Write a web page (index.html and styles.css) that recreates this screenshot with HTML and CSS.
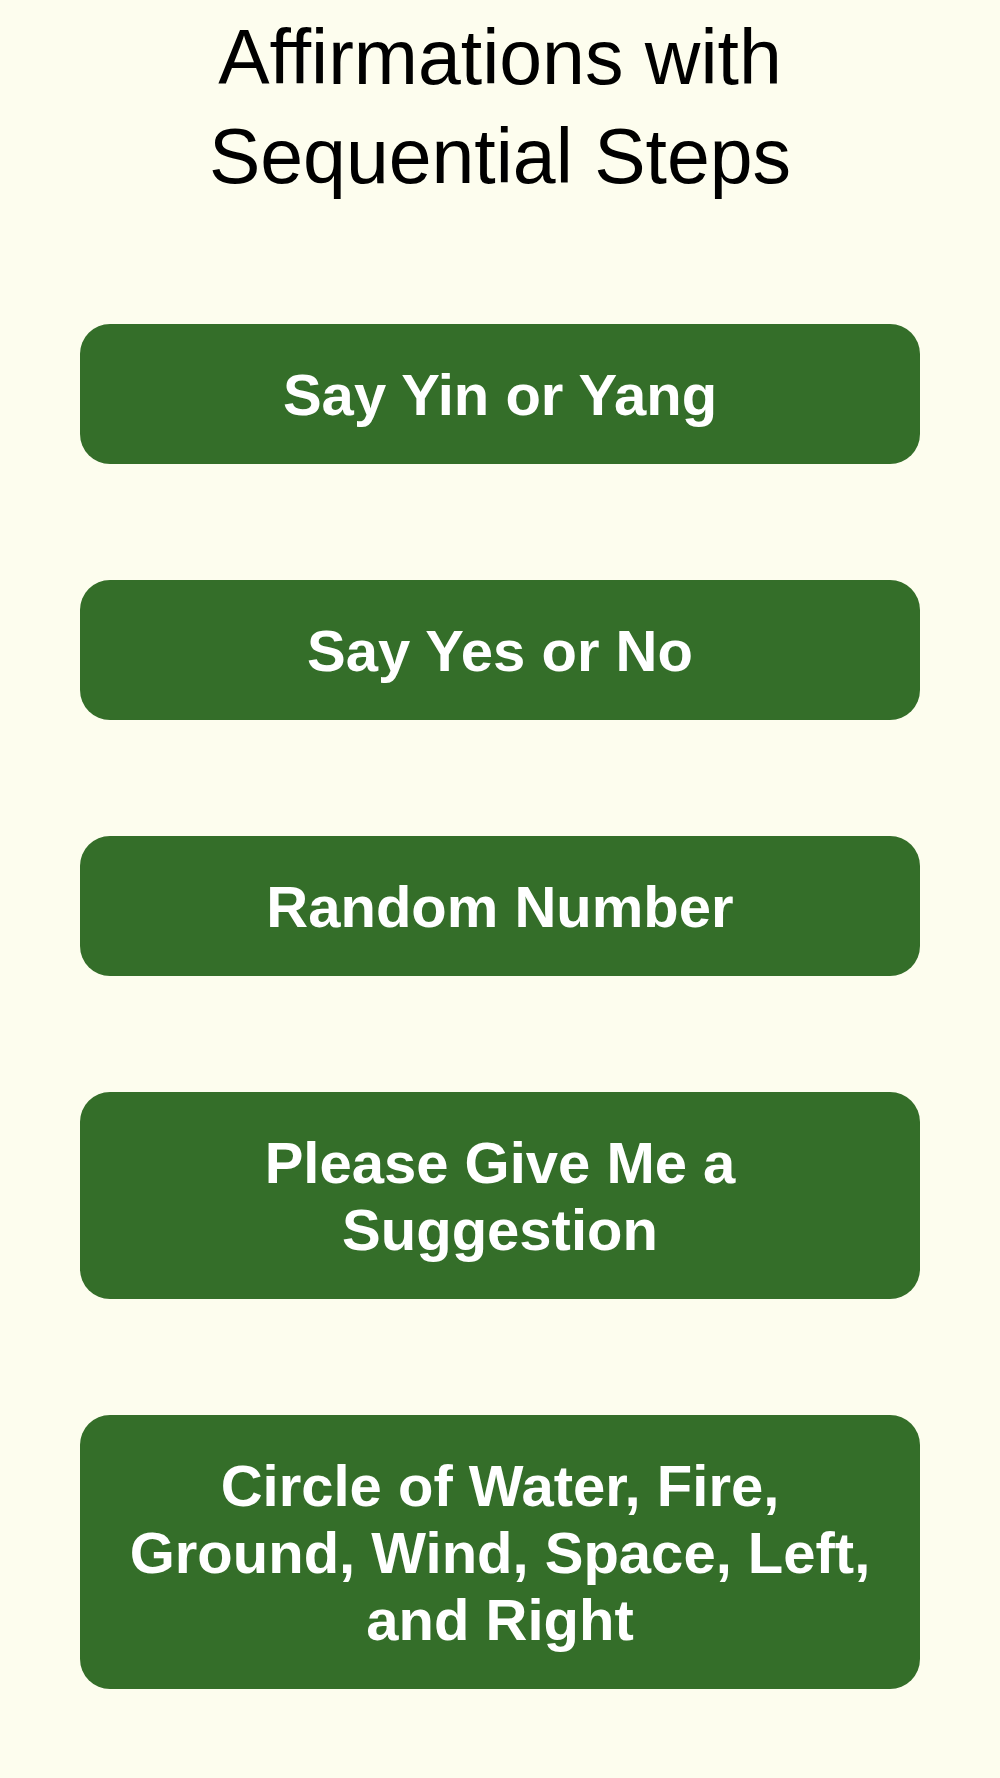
FILE: index.html
```html
<!DOCTYPE html>
<html lang="en">

<head>
    <meta charset="UTF-8">
    <meta name="viewport" content="width=device-width, initial-scale=1.0">
    <title>Affirmations with Sequential Steps</title>
    <link rel="stylesheet" href="styles.css">
</head>

<body>

    <div class="container">
        <h1 class="title">Affirmations with Sequential Steps</h1>

        <div class="menu">
            <button class="menu-button">Say Yin or Yang</button>
            <button class="menu-button">Say Yes or No</button>
            <button class="menu-button">Random Number</button>
            <button class="menu-button">Please Give Me a Suggestion</button>
            <button class="menu-button">Circle of Water, Fire, Ground, Wind, Space, Left, and Right</button>
        </div>
    </div>

</body>

</html>
```

FILE: styles.css
```css
body {
    margin: 0;
    font-family: "Liberation Sans", Arial, Helvetica, sans-serif;
    background-color: #fdfdee;
}

.container {
    padding: 8px 80px 40px;
    text-align: center;
}

.title {
    margin: 0 0 118px;
    font-size: 77px;
    font-weight: normal;
    line-height: 99px;
    color: black;
}

.menu {
    display: flex;
    flex-direction: column;
    gap: 116px;
}

.menu-button {
    display: block;
    width: 100%;
    padding: 36.5px 40px;
    border: none;
    border-radius: 30px;
    background-color: #346e29;
    color: white;
    font-family: inherit;
    font-size: 58px;
    font-weight: bold;
    line-height: 67px;
    cursor: pointer;
}
```
